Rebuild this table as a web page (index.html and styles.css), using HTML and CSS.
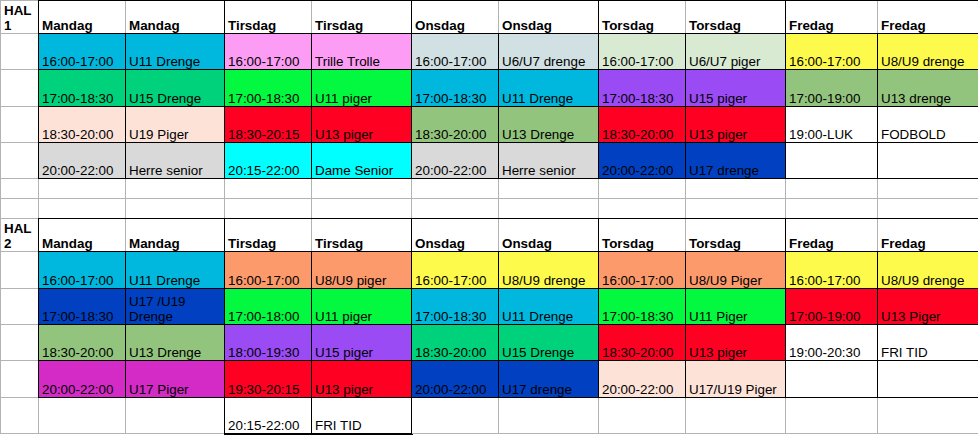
FILE: index.html
```html
<!DOCTYPE html>
<html lang="da">
<head>
<meta charset="utf-8">
<title>Hal skema</title>
<link rel="stylesheet" href="styles.css">
</head>
<body>
<div class="frame">
<div class="sheet">
  <div class="row">
    <div class="c h">HAL<br>1</div>
    <div class="c h hl">Mandag</div><div class="c h hr">Mandag</div>
    <div class="c h hl">Tirsdag</div><div class="c h hr">Tirsdag</div>
    <div class="c h hl">Onsdag</div><div class="c h hr">Onsdag</div>
    <div class="c h hl">Torsdag</div><div class="c h hr">Torsdag</div>
    <div class="c h hl">Fredag</div><div class="c h hr">Fredag</div>
  </div>
  <div class="row">
    <div class="c"></div>
    <div class="c b sky">16:00-17:00</div><div class="c b sky">U11 Drenge</div>
    <div class="c b pink">16:00-17:00</div><div class="c b pink">Trille Trolle</div>
    <div class="c b ice">16:00-17:00</div><div class="c b ice">U6/U7 drenge</div>
    <div class="c b mint">16:00-17:00</div><div class="c b mint">U6/U7 piger</div>
    <div class="c b yellow">16:00-17:00</div><div class="c b yellow">U8/U9 drenge</div>
  </div>
  <div class="row">
    <div class="c"></div>
    <div class="c b green">17:00-18:30</div><div class="c b green">U15 Drenge</div>
    <div class="c b lime">17:00-18:30</div><div class="c b lime">U11 piger</div>
    <div class="c b sky">17:00-18:30</div><div class="c b sky">U11 Drenge</div>
    <div class="c b purple">17:00-18:30</div><div class="c b purple">U15 piger</div>
    <div class="c b sage">17:00-19:00</div><div class="c b sage">U13 drenge</div>
  </div>
  <div class="row">
    <div class="c"></div>
    <div class="c b peach">18:30-20:00</div><div class="c b peach">U19 Piger</div>
    <div class="c b red">18:30-20:15</div><div class="c b red">U13 piger</div>
    <div class="c b sage">18:30-20:00</div><div class="c b sage">U13 Drenge</div>
    <div class="c b red">18:30-20:00</div><div class="c b red">U13 piger</div>
    <div class="c b">19:00-LUK</div><div class="c b">FODBOLD</div>
  </div>
  <div class="row">
    <div class="c"></div>
    <div class="c b grey">20:00-22:00</div><div class="c b grey">Herre senior</div>
    <div class="c b cyan">20:15-22:00</div><div class="c b cyan">Dame Senior</div>
    <div class="c b grey">20:00-22:00</div><div class="c b grey">Herre senior</div>
    <div class="c b navy">20:00-22:00</div><div class="c b navy">U17 drenge</div>
    <div class="c b"></div><div class="c b"></div>
  </div>
  <div class="row">
    <div class="c"></div><div class="c"></div><div class="c"></div><div class="c"></div><div class="c"></div><div class="c"></div>
    <div class="c"></div><div class="c"></div><div class="c"></div><div class="c"></div><div class="c"></div>
  </div>
  <div class="row">
    <div class="c"></div><div class="c"></div><div class="c"></div><div class="c"></div><div class="c"></div><div class="c"></div>
    <div class="c"></div><div class="c"></div><div class="c"></div><div class="c"></div><div class="c"></div>
  </div>

  <div class="row">
    <div class="c h">HAL<br>2</div>
    <div class="c h hl">Mandag</div><div class="c h hr">Mandag</div>
    <div class="c h hl">Tirsdag</div><div class="c h hr">Tirsdag</div>
    <div class="c h hl">Onsdag</div><div class="c h hr">Onsdag</div>
    <div class="c h hl">Torsdag</div><div class="c h hr">Torsdag</div>
    <div class="c h hl">Fredag</div><div class="c h hr">Fredag</div>
  </div>
  <div class="row">
    <div class="c"></div>
    <div class="c b sky">16:00-17:00</div><div class="c b sky">U11 Drenge</div>
    <div class="c b orange">16:00-17:00</div><div class="c b orange">U8/U9 piger</div>
    <div class="c b yellow">16:00-17:00</div><div class="c b yellow">U8/U9 drenge</div>
    <div class="c b orange">16:00-17:00</div><div class="c b orange">U8/U9 Piger</div>
    <div class="c b yellow">16:00-17:00</div><div class="c b yellow">U8/U9 drenge</div>
  </div>
  <div class="row">
    <div class="c"></div>
    <div class="c b navy">17:00-18:30</div><div class="c b navy">U17 /U19<br>Drenge</div>
    <div class="c b lime">17:00-18:00</div><div class="c b lime">U11 piger</div>
    <div class="c b sky">17:00-18:30</div><div class="c b sky">U11 Drenge</div>
    <div class="c b lime">17:00-18:30</div><div class="c b lime">U11 Piger</div>
    <div class="c b red">17:00-19:00</div><div class="c b red">U13 Piger</div>
  </div>
  <div class="row">
    <div class="c"></div>
    <div class="c b sage">18:30-20:00</div><div class="c b sage">U13 Drenge</div>
    <div class="c b purple">18:00-19:30</div><div class="c b purple">U15 piger</div>
    <div class="c b green">18:30-20:00</div><div class="c b green">U15 Drenge</div>
    <div class="c b red">18:30-20:00</div><div class="c b red">U13 piger</div>
    <div class="c b">19:00-20:30</div><div class="c b">FRI TID</div>
  </div>
  <div class="row">
    <div class="c"></div>
    <div class="c b magenta">20:00-22:00</div><div class="c b magenta">U17 Piger</div>
    <div class="c b red">19:30-20:15</div><div class="c b red">U13 piger</div>
    <div class="c b navy">20:00-22:00</div><div class="c b navy">U17 drenge</div>
    <div class="c b peach">20:00-22:00</div><div class="c b peach">U17/U19 Piger</div>
    <div class="c b"></div><div class="c b"></div>
  </div>
  <div class="row">
    <div class="c"></div>
    <div class="c"></div><div class="c"></div>
    <div class="c b">20:15-22:00</div><div class="c b">FRI TID</div>
    <div class="c"></div><div class="c"></div>
    <div class="c"></div><div class="c"></div>
    <div class="c"></div><div class="c"></div>
  </div>
</div>
</div>
</body>
</html>
```

FILE: styles.css
```css
html, body {
  margin: 0;
  padding: 0;
  background: #fff;
}

body {
  font-family: "Liberation Sans", Arial, Helvetica, sans-serif;
  color: #000;
}

.frame {
  width: 978px;
  height: 435px;
  overflow: hidden;
}

.sheet {
  display: grid;
  grid-template-columns: 38px 87px 99px 87px 100px 87px 100px 87px 100px 92px 130px;
  grid-template-rows: 33px 36px 37px 36px 36px 20px 20px 33px 37px 36px 36px 37px 36px;
  width: max-content;
  border-top: 1px solid #b3b3b3;
  border-left: 1px solid #b3b3b3;
}

.row {
  display: contents;
}

.c {
  box-sizing: border-box;
  display: flex;
  flex-direction: column;
  justify-content: flex-end;
  padding: 0 0 0 3px;
  border-right: 1px solid #b3b3b3;
  border-bottom: 1px solid #b3b3b3;
  background: #fff;
  font-size: 13.4px;
  line-height: 15px;
  white-space: nowrap;
  overflow: visible;
}

.h {
  font-weight: bold;
}

/* fully boxed cell */
.b {
  border-right-color: #000;
  border-bottom-color: #000;
  box-shadow: 0 0 0 1px #000;
}

/* header pair: left half */
.hl {
  border-bottom-color: #000;
  box-shadow: 0 -1px 0 0 #000, -1px 0 0 0 #000, -1px -1px 0 0 #000;
}

/* header pair: right half */
.hr {
  border-right-color: #000;
  border-bottom-color: #000;
  box-shadow: 0 -1px 0 0 #000;
}

.sky { background: #00b8dd; }
.pink { background: #fd9cf4; }
.ice { background: #d0e0e3; }
.mint { background: #d9ead3; }
.yellow { background: #fefa4c; }
.green { background: #00d17b; }
.lime { background: #02f93f; }
.purple { background: #9a4bf4; }
.sage { background: #93c47d; }
.peach { background: #fde2d8; }
.red { background: #fe0022; }
.grey { background: #d9d9d9; }
.cyan { background: #00ffff; }
.navy { background: #0141c1; }
.orange { background: #fd9a6b; }
.magenta { background: #d42bc6; }
```
